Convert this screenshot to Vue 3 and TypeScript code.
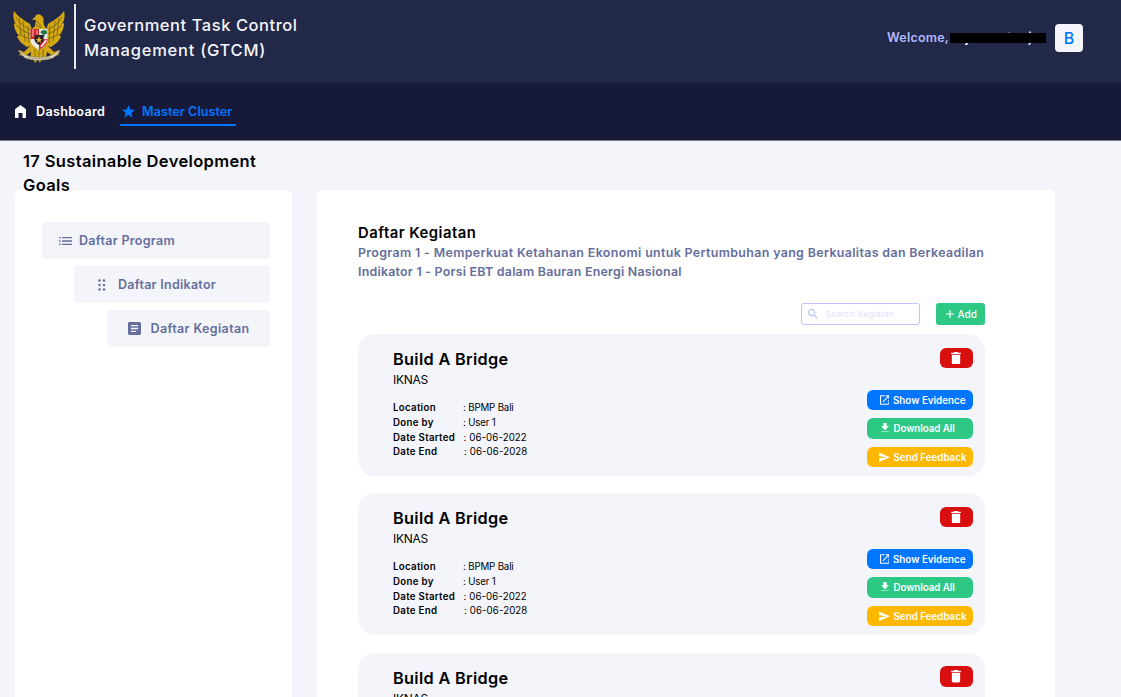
<script setup lang="ts">
interface Detail {
  label: string
  value: string
  indent: string
}
interface Activity {
  id: number
  title: string
  owner: string
  details: Detail[]
}

const details: Detail[] = [
  { label: 'Location', value: 'BPMP Bali', indent: 'loc' },
  { label: 'Done by', value: 'User 1', indent: 'user' },
  { label: 'Date Started', value: '06-06-2022', indent: 'start' },
  { label: 'Date End', value: '06-06-2028', indent: 'end' },
]

const activities: Activity[] = [1, 2, 3].map((id) => ({
  id,
  title: 'Build A Bridge',
  owner: 'IKNAS',
  details: id < 3 ? details : [],
}))
</script>

<template>
  <div class="page">
    <header class="topbar">
      <svg class="emblem" viewBox="0 0 52 56">
        <g fill="#d4a812">
          <path d="M1 2C5 8 11 11 17 15L20 24V36L14 38C9 35 5 31 4 27L6 27C2 22 1 18 1 14L3 15C0 10 0 6 1 2Z" />
          <path d="M51 2C47 8 41 11 35 15L32 24V36L38 38C43 35 47 31 48 27L46 27C50 22 51 18 51 14L49 15C52 10 52 6 51 2Z" />
          <path d="M19 10.500L22 8C22 6 25 5 27 5.500L30 8C31 10 30 13 31 16L34 21V38H18V21L22 17L23 11Z" />
          <path d="M20 36H32L34 44L32 51L29 49L27 54L25 50L22 54L20 49L17 51L18 43Z" />
          <path d="M18 36L11 43L6 41L8 45L5 46L12 47L21 41ZM34 36L41 43L46 41L44 45L47 46L40 47L31 41Z" />
        </g>
        <path d="M3 8C7 15 12 18 18 21M3 16C8 21 12 23 18 25M6 25C10 28 14 29 18 30M49 8C45 15 40 18 34 21M49 16C44 21 40 23 34 25M46 25C42 28 38 29 34 30M6 9L8 26M10 12L12 32M15 17L16 34M46 9L44 26M42 12L40 32M37 17L36 34M22 40V49M26 39V51M30 40V49M24 12L28 17M23 16L29 19" fill="none" stroke="#755f12" stroke-width="0.8" />
        <path d="M5 41C9 43 10 45 13 46C22 49 31 49 39 46C42 45 43 43 47 41L46 44L40 49C31 52 21 52 12 49L7 44Z" fill="#d6d3bd" stroke="#8f7a1e" stroke-width="0.4" />
        <path d="M15 48C23 50 30 50 37 48" fill="none" stroke="#6d6548" stroke-width="0.8" stroke-dasharray="1 0.8" />
        <path d="M17.500 20H34.500V32C34 36 29 39 26 41C23 39 18 36 17.500 32Z" fill="#eee9e5" />
        <path d="M17.500 20H26V30H17.500ZM26 30H34.500V32C34 36 29 39 26 41Z" fill="#d8212b" />
        <path d="M20 20V28M24 21V27" stroke="#eee" stroke-width="0.8" />
        <path d="M28 24C27 21 33 20 34 23L33 25H31V28H30V25Z" fill="#167446" stroke="#167446" stroke-width="0.600" />
        <path d="M27 38L33 30L34 32L29 38Z" fill="#eee" />
        <path d="M21.500 26H30.500V31C29 34 27 35 26 36C24 35 22 33 21.500 31Z" fill="#272325" />
        <path d="M26 27L27 30H29L27.500 31.500L28 34L26 32.500L24 34L24.500 31.500L23 30H25Z" fill="#e4bb2d" />
      </svg>
      <div class="rule"></div>
      <h1 class="brand">
        <span class="brand-a">Government Task Control</span>
        <span class="brand-b">Management (GTCM)</span>
      </h1>
      <div class="account">
        <span class="welcome">Welcome,</span>
        <svg class="name" viewBox="0 0 97 14">
          <path d="M18 11L16.500 13.500H15M80 0.500V2M80 10V12.500L78.500 13.500" fill="none" stroke="#fff" stroke-width="1.5" />
          <path d="M58 1.500H60" stroke="#59608a" />
          <rect y="2" width="96" height="10" fill="#000" />
        </svg>
        <span class="avatar">B</span>
      </div>
    </header>

    <nav class="nav">
      <a class="nav-link home">
        <svg class="nav-icon-home" viewBox="0 0 11 13"><path d="M0 4.300L5.500 0L11 4.300V13H7.500V8H3.500V13H0Z" /></svg>
        <span class="t-dashboard">Dashboard</span>
      </a>
      <a class="nav-link active">
        <svg class="nav-icon-star" viewBox="2 2 20 19"><path d="M12 17.270L18.180 21L16.540 13.970L22 9.240L14.810 8.630L12 2L9.190 8.630L2 9.240L7.460 13.970L5.820 21Z" /></svg>
        <span class="t-master">Master Cluster</span>
      </a>
    </nav>

    <main class="content">
      <aside class="sidebar">
        <h2 class="side-title">
          <span>17 Sustainable Development</span>
          <span>Goals</span>
        </h2>
        <div class="side-panel">
          <div class="menu-item program">
            <svg class="list-icon" viewBox="0 0 13 8"><path d="M0 0H1.500V1.400H0ZM0 3.300H1.500V4.700H0ZM0 6.600H1.500V8H0ZM3 0H13V1.300H3ZM3 3.350H13V4.650H3ZM3 6.700H13V8H3Z" /></svg>
            <span>Daftar Program</span>
          </div>
          <div class="menu-item indikator">
            <svg class="dots-icon" viewBox="0 0 8 12">
              <circle cx="1.500" cy="1.600" r="1.250" /><circle cx="6" cy="1.600" r="1.250" />
              <circle cx="1.500" cy="6" r="1.250" /><circle cx="6" cy="6" r="1.250" />
              <circle cx="1.500" cy="10.400" r="1.250" /><circle cx="6" cy="10.400" r="1.250" />
            </svg>
            <span>Daftar Indikator</span>
          </div>
          <div class="menu-item kegiatan">
            <svg class="doc-icon" viewBox="3 3 18 18"><path d="M19 3H5C3.900 3 3 3.900 3 5V19C3 20.100 3.900 21 5 21H19C20.100 21 21 20.100 21 19V5C21 3.900 20.100 3 19 3ZM14 17H7V15H14ZM17 13H7V11H17ZM17 9H7V7H17Z" /></svg>
            <span>Daftar Kegiatan</span>
          </div>
        </div>
      </aside>

      <section class="board">
        <h2 class="board-title">Daftar Kegiatan</h2>
        <p class="crumb crumb-a">Program 1 - Memperkuat Ketahanan Ekonomi untuk Pertumbuhan yang Berkualitas dan Berkeadilan</p>
        <p class="crumb crumb-b">Indikator 1 - Porsi EBT dalam Bauran Energi Nasional</p>

        <div class="tools">
          <div class="search">
            <svg class="search-icon" viewBox="3 3 18 18"><path fill-rule="evenodd" d="M15.500 14H14.710L14.430 13.730A6.500 6.500 0 1 0 13.730 14.430L14 14.710V15.500L19 20.490L20.490 19ZM9.500 14A4.500 4.500 0 1 1 9.500 5A4.500 4.500 0 0 1 9.500 14Z" /></svg>
            <span class="t-search">Search Kegiatan</span>
          </div>
          <button class="add">
            <svg class="plus" viewBox="0 0 8 8"><path d="M4 0V8M0 4H8" stroke="#fff" stroke-width="1.100" /></svg>
            <span>Add</span>
          </button>
        </div>

        <div class="cards">
          <article v-for="item in activities" :key="item.id" class="card">
            <div class="info">
              <h3 class="card-title">{{ item.title }}</h3>
              <div class="owner">{{ item.owner }}</div>
              <dl class="details">
                <div v-for="d in item.details" :key="d.label" class="row" :class="d.indent">
                  <dt>{{ d.label }}</dt>
                  <dd>: {{ d.value }}</dd>
                </div>
              </dl>
            </div>
            <div class="actions">
              <button class="btn delete">
                <svg class="trash" viewBox="5 3 14 18"><path d="M6 19C6 20.100 6.900 21 8 21H16C17.100 21 18 20.100 18 19V7H6ZM19 4H15.500L14.500 3H9.500L8.500 4H5V6H19Z" /></svg>
              </button>
              <template v-if="item.details.length">
                <button class="btn show">
                  <svg class="ico" viewBox="3 3 18 18"><path d="M19 19H5V5H12V3H5C3.890 3 3 3.900 3 5V19C3 20.100 3.890 21 5 21H19C20.100 21 21 20.100 21 19V12H19ZM14 3V5H17.590L7.760 14.830L9.170 16.240L19 6.410V10H21V3Z" /></svg>
                  <span>Show Evidence</span>
                </button>
                <button class="btn download">
                  <svg class="ico dl" viewBox="5 3 14 17"><path d="M19 9H15V3H9V9H5L12 16ZM5 18V20H19V18Z" /></svg>
                  <span>Download All</span>
                </button>
                <button class="btn feedback">
                  <svg class="ico send" viewBox="2 3 21 18"><path d="M2.010 21L23 12L2.010 3L2 10L17 12L2 14Z" /></svg>
                  <span>Send Feedback</span>
                </button>
              </template>
            </div>
          </article>
        </div>
      </section>
    </main>
  </div>
</template>

<style>
html, body { margin: 0; overflow: hidden; }
</style>

<style scoped>
* { box-sizing: border-box; }
.page {
  width: 1121px;
  height: 697px;
  overflow: hidden;
  background: #f4f5fa;
  color: #000;
  font-family: Inter, "Noto Sans", sans-serif;
  white-space: nowrap;
}
h1, h2, h3, p, dl, dd, dt { margin: 0; font-weight: inherit; }
button { border: 0; padding: 0; font: inherit; color: #fff; }
svg { display: block; flex: none; fill: currentColor; }

.topbar {
  display: flex;
  align-items: flex-start;
  height: 83px;
  padding-left: 13px;
  background: #222847;
  border-bottom: 1px solid #1b1f40;
}
.emblem { width: 52px; height: 56px; margin-top: 9px; }
.rule { width: 2px; height: 65px; margin: 4px 0 0 9px; background: #e9eaf0; }
.brand {
  display: flex;
  flex-direction: column;
  margin: 13px 0 0 8px;
  color: #f4f5fa;
  font-size: 16.5px;
  font-weight: 500;
  line-height: 24.5px;
}
.brand-a { letter-spacing: 0.55px; }
.brand-b { letter-spacing: 0.75px; }
.account { display: flex; align-items: center; margin: 24px 38px 0 auto; height: 28px; }
.welcome { color: #b3b9ff; font-size: 12.5px; font-weight: 600; letter-spacing: 0.22px; width: 63px; margin-top: -2px; }
.name { width: 97px; height: 14px; }
.avatar {
  width: 28px;
  height: 28px;
  margin-left: 8px;
  border-radius: 4px;
  background: #f4f5fa;
  color: #0075ff;
  font-size: 16px;
  font-weight: 500;
  line-height: 28px;
  text-align: center;
}

.nav {
  display: flex;
  height: 57.5px;
  padding: 15px 0 0 15px;
  background: #171939;
  border-bottom: 1px solid #777991;
  color: #fff;
  font-size: 12.6px;
  font-weight: 600;
}
.nav-link { display: flex; align-items: center; height: 28px; }
.nav-icon-home { width: 11px; height: 13px; }
.home { width: 105px; gap: 10px; height: 27px; letter-spacing: 0.3px; }
.active { width: 116px; padding-left: 2px; gap: 7px; color: #0075ff; border-bottom: 2px solid #0075ff; border-radius: 1px; letter-spacing: 0.05px; }
.active svg, .active span { margin-top: 1px; }
.nav-icon-star { width: 13px; height: 12.5px; }

.content { display: flex; padding-left: 15px; height: 557px; }
.sidebar { width: 277px; display: flex; flex-direction: column; }
.side-title {
  display: flex;
  flex-direction: column;
  height: 49.900px;
  padding: 8px 0 0 8px;
  font-size: 16.500px;
  font-weight: 600;
  line-height: 24.5px;
  letter-spacing: 0.35px;
  z-index: 1;
}
.side-panel {
  flex: 1;
  display: flex;
  flex-direction: column;
  align-items: flex-end;
  gap: 7px;
  padding: 32px 22px 0 0;
  background: #fff;
  border-radius: 5px 5px 0 0;
}
.menu-item {
  display: flex;
  align-items: center;
  height: 37px;
  border-radius: 4px;
  background: #f4f5fa;
  color: #656e9d;
  font-size: 12.5px;
  font-weight: 600;
}
.program { width: 228px; padding-left: 17px; gap: 7px; letter-spacing: 0.3px; }
.indikator { width: 196px; padding-left: 24px; gap: 12px; letter-spacing: 0.27px; }
.kegiatan { width: 163px; padding-left: 21px; gap: 9.500px; letter-spacing: 0.36px; }
.list-icon { width: 13px; height: 8px; }
.dots-icon { width: 8px; height: 12px; }
.doc-icon { width: 13px; height: 13px; }

.board {
  width: 738px;
  margin: 49.900px 0 0 25px;
  padding: 33px 0 0 41px;
  background: #fff;
  border-radius: 5px 5px 0 0;
}
.board-title { font-size: 14.800px; font-weight: 600; line-height: 20px; height: 20px; letter-spacing: 0.500px; }
.crumb { color: #656e9d; font-size: 12.400px; font-weight: 600; line-height: 19px; height: 19px; }
.crumb-a { letter-spacing: 0.360px; }
.crumb-b { letter-spacing: 0.240px; }
.tools { display: flex; justify-content: flex-end; gap: 16px; width: 626.5px; margin-top: 21.500px; height: 22px; }
.search {
  display: flex;
  align-items: center;
  width: 119px;
  height: 22px;
  padding-left: 6px;
  gap: 8px;
  border: 1px solid #bfc5ff;
  border-radius: 3px;
  color: #b9c0fc;
  font-size: 8px;
  letter-spacing: 0.450px;
}
.t-search { color: #dde0ff; }
.search-icon { width: 10px; height: 10px; }
.add { display: flex; align-items: center; width: 48.5px; height: 22px; padding-left: 10px; gap: 3.500px; border-radius: 3px; background: #2dc884; font-size: 10px; font-weight: 500; }
.plus { width: 8px; height: 8px; }

.cards { margin-top: 9.500px; }
.card {
  display: flex;
  justify-content: space-between;
  width: 626.5px;
  height: 141.5px;
  margin-bottom: 17.500px;
  padding: 0 12px 0 35px;
  border-radius: 17px;
  background: #f4f5fa;
}
.card:nth-child(2) { margin-bottom: 18px; }
.card-title { font-size: 16.300px; font-weight: 600; line-height: 24px; margin-top: 13px; letter-spacing: 0.320px; }
.owner { font-size: 12px; line-height: 17px; letter-spacing: -0.300px; }
.details { margin-top: 12.800px; font-size: 9.700px; line-height: 14.700px; }
.row { display: flex; height: 14.700px; }
.row dt { width: 70px; font-weight: 600; letter-spacing: 0.300px; }
.row.loc dd, .row.user dd { letter-spacing: -0.150px; }
.row.start dd, .row.end dd { letter-spacing: 0.100px; }
.row.start dd { padding-left: 0.5px; }
.row.end dd { padding-left: 1px; }
.actions { display: flex; flex-direction: column; align-items: flex-end; padding-top: 13.500px; }
.btn { display: flex; align-items: center; width: 106px; height: 20.500px; margin-bottom: 8px; border-radius: 6px; font-size: 9.800px; font-weight: 600; padding-left: 13px; }
.btn span { width: 74px; text-align: left; }
.delete { width: 33px; margin-bottom: 21.500px; padding: 0; justify-content: center; background: #d90f0f; }
.trash { width: 10px; height: 12.500px; }
.show { background: #0075ff; gap: 4px; }
.download { background: #2dc884; gap: 5px; letter-spacing: -0.080px; }
.feedback { background: #ffb800; gap: 4px; padding-left: 12px; }
.ico { width: 9.500px; height: 10px; }
.dl { width: 8px; height: 9.500px; margin: -2px 0 0 1px; }
.send { width: 11px; height: 10.500px; }
</style>
